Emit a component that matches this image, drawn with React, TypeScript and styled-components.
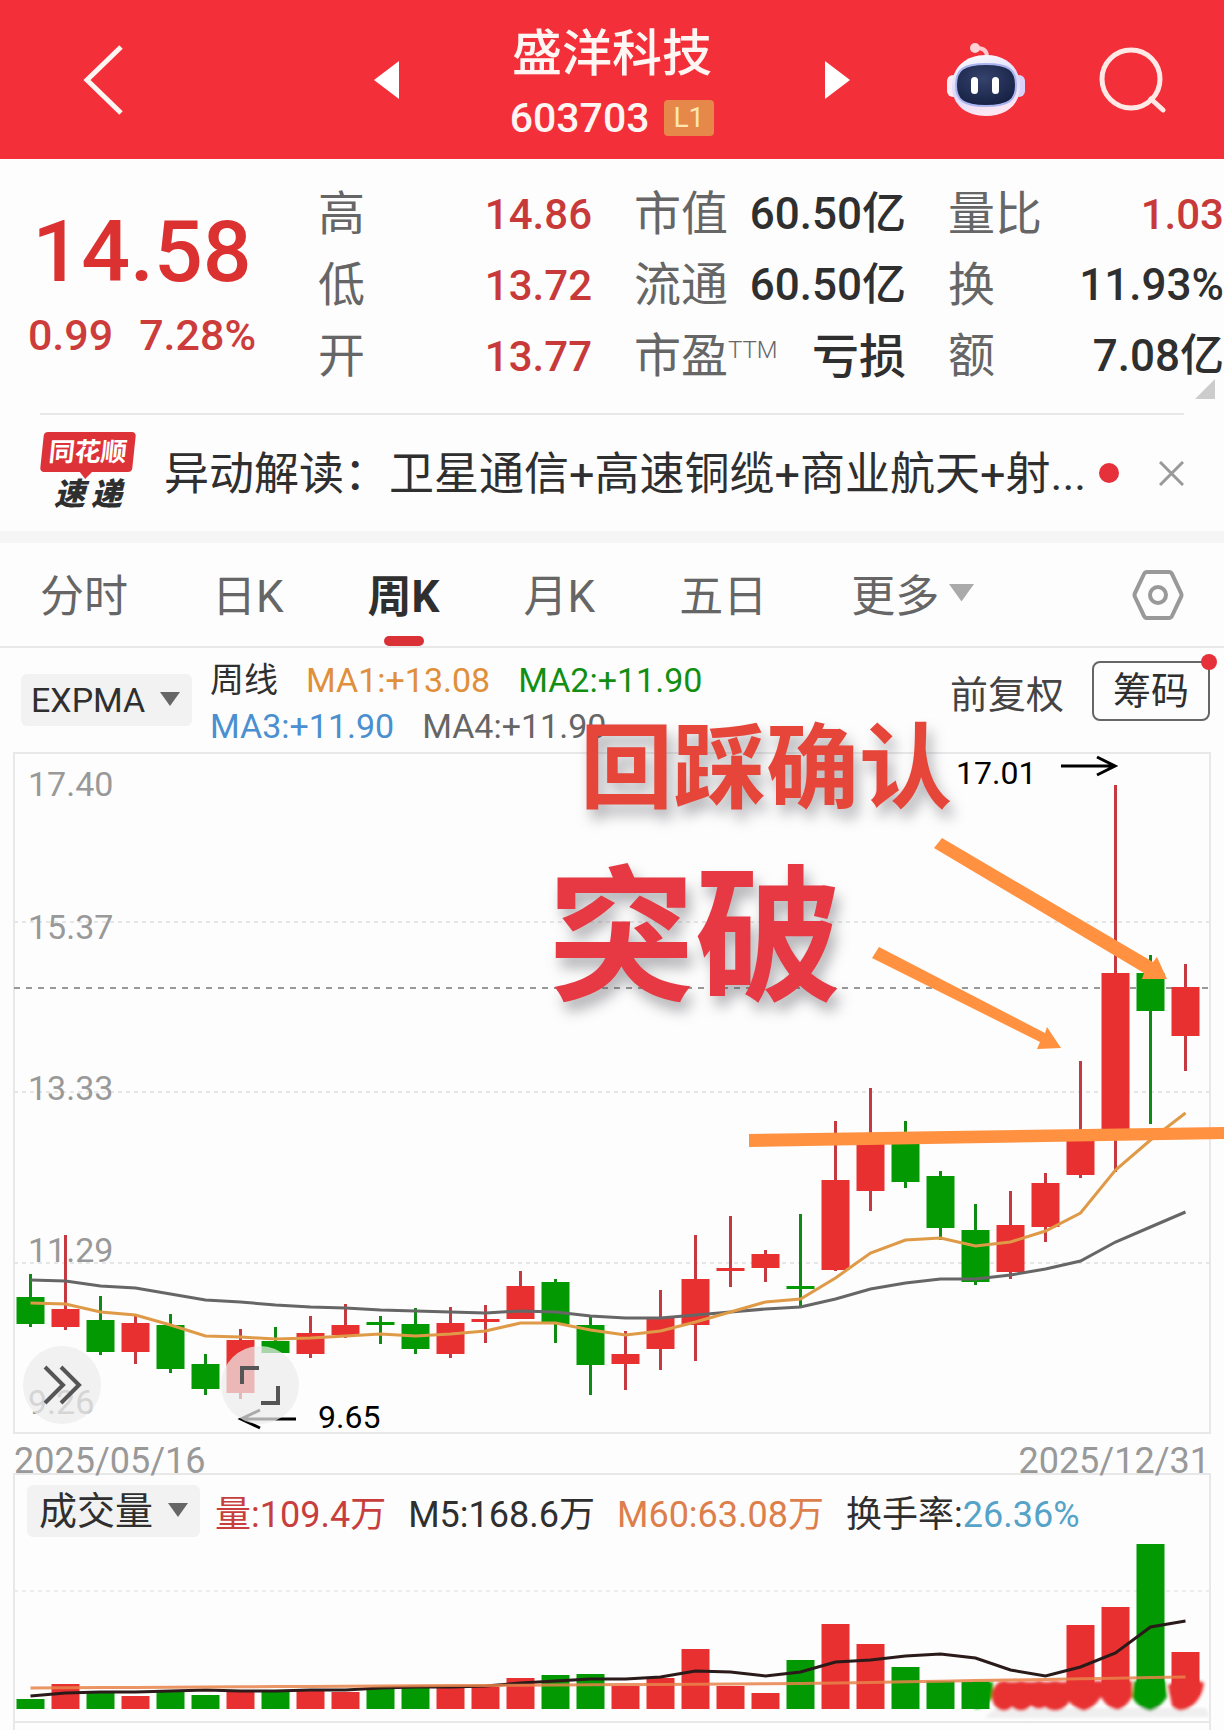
import React from "react";
import styled, { createGlobalStyle } from "styled-components";

const RED = "#e83030";
const GREEN = "#039903";
const INK = "#2f2f2f";
const MUTED = "#666";
const FAINT = "#999";
const LINE = "#e8e8e8";
const ORANGE = "#ff9140";

const GlobalStyle = createGlobalStyle`
  *, *::before, *::after { box-sizing: border-box; }
  body {
    margin: 0;
    background: #fdfdfd;
    color: ${INK};
    font-family: Roboto, "Noto Sans CJK SC", sans-serif;
    overflow-x: hidden;
  }
  button, select { font: inherit; color: inherit; border: 0; background: none; padding: 0; margin: 0; cursor: pointer; }
  h1, h2, p, dl, dd { margin: 0; font-weight: inherit; }
  svg { display: block; }
`;

/* ---------- header ---------- */

const Header = styled.header`
  display: grid;
  grid-template-columns: 1fr auto 1fr;
  align-items: center;
  height: 159px;
  background: #f32f39;
  color: #fff5f3;
`;

const HeaderSide = styled.div<{ $end?: boolean }>`
  display: flex;
  align-items: center;
  justify-content: ${(p) => (p.$end ? "flex-end" : "flex-start")};
  gap: 72px;
  padding: ${(p) => (p.$end ? "0 58px 0 0" : "0 0 0 80px")};
`;

const StockSwitcher = styled.div`
  display: flex;
  align-items: center;
  gap: 111px;
`;

const StockTitle = styled.div`
  display: flex;
  flex-direction: column;
  align-items: center;
  padding-top: 8px;
`;

const StockName = styled.h1`
  font-size: 50px;
  line-height: 68px;
  font-weight: 500;
`;

const StockCode = styled.div`
  display: flex;
  align-items: center;
  gap: 14px;
  font-size: 41px;
  line-height: 60px;
  font-weight: 500;
`;

const LevelBadge = styled.span`
  padding: 0 10px;
  border-radius: 4px;
  background: #e5884a;
  color: #ffe6b0;
  font-size: 28px;
  line-height: 36px;
  font-weight: 400;
`;

/* ---------- quote ---------- */

const Quote = styled.section`
  position: relative;
  display: grid;
  grid-template-columns: 276fr 274fr 272fr 276fr;
  column-gap: 42px;
  height: 254px;
  padding-top: 19px;
`;

const PriceBlock = styled.div`
  display: flex;
  flex-direction: column;
  align-items: center;
  padding: 28px 0 0 8px;
  color: #dc3131;
  font-weight: 500;
`;

const Price = styled.div`
  font-size: 86px;
  line-height: 92px;
`;

const Change = styled.div`
  display: flex;
  gap: 26px;
  font-size: 43px;
  line-height: 74px;
  color: #cc3c3a;
`;

const StatList = styled.dl`
  display: flex;
  flex-direction: column;
`;

const Stat = styled.div`
  display: flex;
  justify-content: space-between;
  line-height: 71px;
  white-space: nowrap;
`;

const StatLabel = styled.dt`
  font-size: 47px;
  color: ${MUTED};
`;

const Superscript = styled.sup`
  font-size: 24px;
  line-height: 24px;
  vertical-align: 14px;
  font-weight: 300;
`;

const StatValue = styled.dd<{ $up: boolean; $words: boolean }>`
  padding-top: 2px;
  font-size: ${(p) => (p.$words ? 47 : p.$up ? 42 : 44)}px;
  line-height: 69px;
  font-weight: 500;
  color: ${(p) => (p.$up ? "#c83a3a" : INK)};
`;

const CornerMark = styled.svg`
  position: absolute;
  right: 9px;
  bottom: 14px;
`;

/* ---------- notice ---------- */

const Notice = styled.section`
  display: flex;
  align-items: center;
  height: 118px;
  margin: 0 40px;
  border-top: 2px solid ${LINE};
`;

const NoticeLogo = styled.div`
  display: flex;
  flex-direction: column;
  align-items: center;
  flex: none;
  width: 96px;
  margin-right: 28px;
`;

const LogoBubble = styled.span`
  position: relative;
  width: 92px;
  border-radius: 4px;
  background: #dd3238;
  color: #fff;
  font-size: 26px;
  line-height: 40px;
  font-weight: 700;
  text-align: center;
  transform: skewX(-6deg);

  &::after {
    content: "";
    position: absolute;
    left: 39px;
    top: 39px;
    border: solid transparent;
    border-width: 8px 7px 0;
    border-top-color: #dd3238;
  }
`;

const LogoCaption = styled.span`
  display: flex;
  gap: 6px;
  padding-top: 4px;
  font-size: 31px;
  line-height: 38px;
  font-weight: 900;
  font-style: italic;
`;

const NoticeText = styled.a`
  flex: 1;
  min-width: 0;
  overflow: hidden;
  padding-top: 4px;
  color: ${INK};
  font-size: 45px;
  line-height: 66px;
  text-decoration: none;
  white-space: nowrap;
`;

const Dot = styled.i<{ $size: number }>`
  display: block;
  flex: none;
  width: ${(p) => p.$size}px;
  height: ${(p) => p.$size}px;
  border-radius: 50%;
  background: #e6303a;
`;

const CloseButton = styled.button`
  flex: none;
  margin-left: 40px;
`;

/* ---------- tabs ---------- */

const Tabs = styled.nav`
  display: flex;
  align-items: stretch;
  gap: 84px;
  height: 117px;
  padding: 0 40px;
  border-top: 12px solid #f5f5f5;
  border-bottom: 2px solid ${LINE};
`;

const Tab = styled.button<{ $active?: boolean }>`
  position: relative;
  display: flex;
  align-items: center;
  gap: 10px;
  padding-bottom: 4px;
  font-size: 44px;
  color: ${(p) => (p.$active ? INK : MUTED)};
  font-weight: ${(p) => (p.$active ? 700 : 400)};
  white-space: nowrap;

  &::after {
    content: "";
    display: ${(p) => (p.$active ? "block" : "none")};
    position: absolute;
    left: 50%;
    bottom: 0;
    width: 40px;
    height: 10px;
    margin-left: -20px;
    border-radius: 5px;
    background: #d93136;
  }
`;

const SettingsButton = styled.button`
  margin-left: auto;
`;

/* ---------- indicator toolbars ---------- */

const Toolbar = styled.div`
  display: flex;
  align-items: center;
  height: 104px;
  padding: 0 14px 0 21px;
`;

const Picker = styled.label`
  position: relative;
  flex: none;
  border-radius: 6px;
  background: #f2f2f2;

  svg { position: absolute; right: 12px; top: 50%; margin-top: -8px; pointer-events: none; }
`;

const PickerSelect = styled.select<{ $size: number; $pad: number }>`
  display: block;
  appearance: none;
  height: 52px;
  padding: 0 46px 0 ${(p) => p.$pad}px;
  font-size: ${(p) => p.$size}px;
  color: ${INK};
`;

const Legend = styled.div`
  display: flex;
  flex: 1;
  flex-wrap: wrap;
  align-content: center;
  column-gap: 28px;
  max-width: 560px;
  margin-left: 18px;
  padding-top: 6px;
  font-size: 34px;
  line-height: 46px;
`;

const Tint = styled.span<{ $color: string }>`
  color: ${(p) => p.$color};
`;

const ToolbarActions = styled.div`
  display: flex;
  align-items: center;
  gap: 28px;
  margin-left: auto;
  padding-bottom: 18px;
`;

const AdjustButton = styled.button`
  font-size: 38px;
  color: #444;
`;

const ChipButton = styled.button`
  position: relative;
  height: 60px;
  padding: 0 19px;
  border: 2px solid #666;
  border-radius: 8px;
  font-size: 38px;
  line-height: 54px;

  ${Dot} { position: absolute; right: -9px; top: -9px; }
`;

/* ---------- charts ---------- */

const ChartArea = styled.section`
  position: relative;
`;

const ChartSvg = styled.svg`
  width: 100%;
  height: auto;
  overflow: visible;
`;

const AxisText = styled.text`
  font-size: 34px;
  fill: ${FAINT};
`;

const MarkText = styled.text`
  font-size: 32px;
  fill: #000;
`;

const NoteText = styled.text<{ $size: number }>`
  font-family: "Noto Sans CJK SC", sans-serif;
  font-size: ${(p) => p.$size}px;
  font-weight: 700;
  filter: drop-shadow(5px 10px 7px rgba(70, 70, 80, 0.4));
`;

const RoundButton = styled.button<{ $x: number }>`
  position: absolute;
  left: ${(p) => p.$x}px;
  bottom: 10px;
  display: grid;
  place-items: center;
  width: 78px;
  height: 78px;
  border-radius: 50%;
  background: rgba(235, 235, 235, 0.72);
`;

const DateRow = styled.div`
  display: flex;
  justify-content: space-between;
  height: 39px;
  margin: 0 14px;
  color: ${FAINT};
  font-size: 36px;
  line-height: 54px;
`;

const VolumeHeader = styled.div`
  display: flex;
  align-items: center;
  height: 64px;
  margin: 0 13px;
  padding: 10px 12px 0;
  border: 2px solid ${LINE};
  border-bottom: 0;
`;

const VolumeLegend = styled.div`
  display: flex;
  gap: 22px;
  margin-left: 15px;
  font-size: 36px;
  white-space: nowrap;
`;

const NextPanel = styled.div`
  height: 9px;
  margin: 0 13px;
  border: 2px solid ${LINE};
  border-bottom: 0;
`;

/* ---------- data, in chart canvas units ---------- */

type Candle = [up: 0 | 1, high: number, top: number, bottom: number, low: number, volumeTop: number];

const candles: Candle[] = [
  [0, 1274, 1297, 1324, 1327, 1699], [1, 1235, 1309, 1327, 1330, 1684], [0, 1296, 1320, 1352, 1355, 1693],
  [1, 1316, 1323, 1352, 1364, 1696], [0, 1314, 1325, 1369, 1373, 1692], [0, 1354, 1364, 1389, 1395, 1695],
  [1, 1329, 1340, 1393, 1399, 1691], [0, 1327, 1341, 1353, 1353, 1690], [1, 1316, 1333, 1354, 1358, 1689],
  [1, 1304, 1325, 1335, 1338, 1692], [0, 1316, 1322, 1325, 1344, 1689], [0, 1308, 1324, 1349, 1354, 1688],
  [1, 1307, 1323, 1354, 1358, 1688], [1, 1305, 1319, 1322, 1343, 1687], [1, 1271, 1286, 1319, 1319, 1678],
  [0, 1279, 1282, 1324, 1343, 1675], [0, 1315, 1325, 1365, 1395, 1674], [1, 1331, 1354, 1364, 1390, 1686],
  [1, 1290, 1318, 1349, 1370, 1678], [1, 1235, 1279, 1325, 1361, 1649], [1, 1216, 1268, 1271, 1287, 1686],
  [1, 1250, 1254, 1268, 1282, 1693], [0, 1214, 1286, 1289, 1307, 1660], [1, 1121, 1180, 1270, 1271, 1624],
  [1, 1088, 1142, 1191, 1211, 1644], [0, 1121, 1144, 1182, 1188, 1667], [0, 1171, 1176, 1228, 1240, 1681],
  [0, 1204, 1230, 1282, 1285, 1682], [1, 1191, 1225, 1272, 1279, 1682], [1, 1173, 1183, 1227, 1242, 1682],
  [1, 1061, 1138, 1175, 1178, 1625], [1, 785, 973, 1132, 1172, 1607], [0, 955, 973, 1011, 1124, 1544],
  [1, 964, 987, 1036, 1071, 1652],
];

const fastAverage = [1303, 1304, 1312, 1315, 1325, 1336, 1337, 1339, 1338, 1336, 1334, 1336, 1334, 1331, 1323, 1323, 1330, 1335, 1331, 1322, 1312, 1302, 1299, 1278, 1253, 1240, 1238, 1246, 1242, 1231, 1213, 1170, 1140, 1113];
const slowAverage = [1280, 1281, 1286, 1288, 1294, 1300, 1302, 1305, 1307, 1308, 1310, 1311, 1312, 1313, 1311, 1312, 1316, 1318, 1318, 1315, 1312, 1309, 1307, 1299, 1289, 1283, 1279, 1279, 1275, 1269, 1261, 1242, 1227, 1212];
const volumeM5 = [1696, 1693, 1692, 1692, 1691, 1690, 1691, 1691, 1690, 1690, 1688, 1687, 1687, 1686, 1683, 1681, 1679, 1679, 1677, 1671, 1672, 1676, 1672, 1662, 1660, 1656, 1654, 1658, 1670, 1676, 1667, 1653, 1627, 1621];
const volumeM60 = candles.map((_, i) => 1688 - i * 0.2 - Math.max(0, i - 22) * 0.4);

const candleX = (i: number) => 30.5 + i * 35;
const toPoints = (ys: number[]) => ys.map((y, i) => `${candleX(i)},${y}`).join(" ");

const priceLabels: [string, number][] = [["17.40", 796], ["15.37", 939], ["13.33", 1100], ["11.29", 1262], ["9.26", 1414]];

const stats = [
  [["高", "14.86", true], ["低", "13.72", true], ["开", "13.77", true]],
  [["市值", "60.50亿", false], ["流通", "60.50亿", false], ["市盈", "亏损", false]],
  [["量比", "1.03", true], ["换", "11.93%", false], ["额", "7.08亿", false]],
] as [string, string, boolean][][];

/* ---------- pieces ---------- */

const Caret = ({ size = 20, color = "#666" }: { size?: number; color?: string }) => (
  <svg width={size} height={size * 0.7} viewBox="0 0 20 14"><path d="M0 0h20L10 14z" fill={color} /></svg>
);

const Robot = () => (
  <svg width="80" height="74" viewBox="0 0 80 74">
    <defs>
      <linearGradient id="shell" x1="0" y1="0" x2="0.3" y2="1">
        <stop offset="0" stopColor="#fff" />
        <stop offset="0.6" stopColor="#dcd8fb" />
        <stop offset="1" stopColor="#fbe6f2" />
      </linearGradient>
      <radialGradient id="visor" cx="0.45" cy="0.35" r="0.7">
        <stop offset="0" stopColor="#35426c" />
        <stop offset="1" stopColor="#151f42" />
      </radialGradient>
    </defs>
    <path d="M41 14c0-6-3-9-10-9" fill="none" stroke="#ffc9cf" strokeWidth="4" />
    <circle cx="29" cy="5" r="5" fill="#ffd3d6" />
    <rect x="1" y="32" width="12" height="22" rx="6" fill="#fdeaf3" />
    <rect x="67" y="32" width="12" height="22" rx="6" fill="#d9d2fa" />
    <path d="M40 12c20 0 34 12 34 31S60 73 40 73 6 62 6 43s14-31 34-31z" fill="url(#shell)" />
    <path d="M40 21c23 0 30 6 30 21s-7 21-30 21-30-6-30-21 7-21 30-21z" fill="url(#visor)" stroke="#a9b4ef" strokeWidth="2" />
    <rect x="25" y="34" width="7" height="17" rx="3.5" fill="#fff" />
    <rect x="46" y="34" width="7" height="17" rx="3.5" fill="#fff" />
  </svg>
);

const PriceChart = () => (
  <ChartSvg viewBox="0 752 1224 682" role="img" aria-label="周K">
    <rect x="14" y="753" width="1196" height="680" fill="none" stroke={LINE} strokeWidth="2" />
    {[922, 1092, 1263].map((y) => (
      <path key={y} d={`M14 ${y}H1210`} stroke="#e6e6e6" strokeWidth="2" strokeDasharray="4 4" />
    ))}
    <path d="M14 988H1210" stroke="#999" strokeWidth="2" strokeDasharray="6 6" />
    {priceLabels.map(([label, y]) => (
      <AxisText key={label} x="28" y={y}>{label}</AxisText>
    ))}
    {candles.map(([up, high, top, bottom, low], i) => (
      <g key={i} fill={up ? RED : GREEN}>
        <rect x={candleX(i) - 1.5} y={high} width="3" height={low - high} fill={up ? "#c43a40" : "#0f8a12"} />
        <rect x={candleX(i) - 14} y={top} width="28" height={bottom - top} />
      </g>
    ))}
    <polyline points={toPoints(slowAverage)} fill="none" stroke="#666" strokeWidth="3" />
    <polyline points={toPoints(fastAverage)} fill="none" stroke="#df9a48" strokeWidth="3" />
    <MarkText x="956" y="784">17.01</MarkText>
    <path d="M1061 766h53M1097 757l18 9-18 9" fill="none" stroke="#000" strokeWidth="3" />
    <MarkText x="318" y="1428">9.65</MarkText>
    <path d="M296 1419h-54M260 1410l-19 9 19 9" fill="none" stroke="#000" strokeWidth="3" />
    <path d="M749 1134L1224 1127V1139L749 1147z" fill={ORANGE} />
    <path d="M942 838L1153 962L1157 957L1167 979H1142L1144 973L934 848z" fill={ORANGE} />
    <path d="M879 947L1045 1033L1047 1027L1061 1048L1037 1049L1040 1042L872 958z" fill={ORANGE} />
    <NoteText $size={93} x="580" y="801" fill="#e6463a">回踩确认</NoteText>
    <NoteText $size={147} x="548" y="989" fill="#e63944">突破</NoteText>
  </ChartSvg>
);

const VolumeChart = () => (
  <ChartSvg viewBox="0 1537 1224 184" role="img" aria-label="成交量">
    <defs>
      <filter id="smudge" x="-10%" y="-20%" width="120%" height="140%"><feGaussianBlur stdDeviation="1.5" /></filter>
    </defs>
    <path d="M14 1537V1721M1210 1537V1721" stroke={LINE} strokeWidth="2" />
    <path d="M14 1591H1210" stroke="#ececec" strokeWidth="2" strokeDasharray="4 4" />
    {candles.map(([up, , , , , top], i) => (
      i === 28 || i === 29 ? null : (
        <rect key={i} x={candleX(i) - 14} y={top} width="28" height={(i > 29 ? 1695 : 1709) - top} fill={up ? RED : GREEN} />
      )
    ))}
    <g filter="url(#smudge)">
      <path d="M984 1718l12-10h210l4 9z" fill="#efefef" />
      <path d="M975 1682h18v14q-6 12-18 13z" fill={GREEN} />
      <g fill={RED}>
        <ellipse cx="1004" cy="1696" rx="12" ry="15" />
        <ellipse cx="1021" cy="1696" rx="13" ry="15" />
        <ellipse cx="1039" cy="1695" rx="12" ry="14" />
        <ellipse cx="1055" cy="1696" rx="15" ry="15" />
        <path d="M1000 1682h66v12h-66z" />
        <path d="M1066 1681h35v16q-8 12-17 14q-12-3-18-14z" />
        <path d="M1101 1681h31v16q-7 12-15 13q-10-2-16-13z" />
        <path d="M1168 1685q20-10 36-2q-2 18-17 26q-9 4-15-3z" />
      </g>
      <path d="M1134 1681h31l2 16q-8 12-17 14q-12-3-18-14z" fill={GREEN} />
    </g>
    <polyline points={toPoints(volumeM5)} fill="none" stroke="#2b1a1a" strokeWidth="3" />
    <polyline points={toPoints(volumeM60)} fill="none" stroke="#e8834a" strokeWidth="3" strokeOpacity="0.85" />
  </ChartSvg>
);

export default function App() {
  return (
    <main>
      <GlobalStyle />
      <Header>
        <HeaderSide>
          <button aria-label="返回">
            <svg width="44" height="72" viewBox="0 0 44 72"><path d="M41 3L7 36l34 33" fill="none" stroke="currentColor" strokeWidth="5" /></svg>
          </button>
        </HeaderSide>
        <StockSwitcher>
          <button aria-label="上一只">
            <svg width="25" height="38" viewBox="0 0 25 38"><path d="M25 0v38L0 19z" fill="#fff" /></svg>
          </button>
          <StockTitle>
            <StockName>盛洋科技</StockName>
            <StockCode>603703<LevelBadge>L1</LevelBadge></StockCode>
          </StockTitle>
          <button aria-label="下一只">
            <svg width="25" height="38" viewBox="0 0 25 38"><path d="M0 0v38l25-19z" fill="#fff" /></svg>
          </button>
        </StockSwitcher>
        <HeaderSide $end>
          <button aria-label="智能助手"><Robot /></button>
          <button aria-label="搜索">
            <svg width="68" height="68" viewBox="0 0 68 68" fill="none" stroke="#ffe9e6" strokeWidth="5">
              <circle cx="33" cy="33" r="29" /><path d="M53 53l12 11" strokeLinecap="round" />
            </svg>
          </button>
        </HeaderSide>
      </Header>

      <Quote>
        <PriceBlock>
          <Price>14.58</Price>
          <Change><span>0.99</span><span>7.28%</span></Change>
        </PriceBlock>
        {stats.map((column, c) => (
          <StatList key={c}>
            {column.map(([label, value, up]) => (
              <Stat key={label}>
                <StatLabel>{label}{label === "市盈" && <Superscript>TTM</Superscript>}</StatLabel>
                <StatValue $up={up} $words={!/\d/.test(value)}>{value}</StatValue>
              </Stat>
            ))}
          </StatList>
        ))}
        <CornerMark width="20" height="20" viewBox="0 0 20 20"><path d="M20 0v20H0z" fill="#ccc" /></CornerMark>
      </Quote>

      <Notice>
        <NoticeLogo>
          <LogoBubble>同花顺</LogoBubble>
          <LogoCaption><span>速</span><span>递</span></LogoCaption>
        </NoticeLogo>
        <NoticeText href="#notice">异动解读：卫星通信+高速铜缆+商业航天+射...</NoticeText>
        <Dot $size={20} />
        <CloseButton aria-label="关闭">
          <svg width="25" height="25" viewBox="0 0 25 25"><path d="M1 1l23 23M24 1L1 24" stroke="#999" strokeWidth="3" /></svg>
        </CloseButton>
      </Notice>

      <Tabs>
        <Tab>分时</Tab>
        <Tab>日K</Tab>
        <Tab $active>周K</Tab>
        <Tab>月K</Tab>
        <Tab>五日</Tab>
        <Tab>更多<Caret size={25} color="#aaa" /></Tab>
        <SettingsButton aria-label="设置">
          <svg width="52" height="50" viewBox="0 0 52 50" fill="none" stroke="#999" strokeWidth="4" strokeLinejoin="round">
            <path d="M15 2h22q2 0 3 2l9 19q1 2 0 4l-9 19q-1 2-3 2H15q-2 0-3-2L3 27q-1-2 0-4l9-19q1-2 3-2z" />
            <circle cx="26" cy="25" r="8" />
          </svg>
        </SettingsButton>
      </Tabs>

      <Toolbar>
        <Picker>
          <PickerSelect $size={34} $pad={10} aria-label="指标" defaultValue="EXPMA">
            <option>EXPMA</option>
          </PickerSelect>
          <Caret />
        </Picker>
        <Legend>
          <span>周线</span>
          <Tint $color="#e08f3a">MA1:+13.08</Tint>
          <Tint $color="#128f12">MA2:+11.90</Tint>
          <Tint $color="#4a8fd0">MA3:+11.90</Tint>
          <Tint $color={MUTED}>MA4:+11.90</Tint>
        </Legend>
        <ToolbarActions>
          <AdjustButton>前复权</AdjustButton>
          <ChipButton>筹码<Dot $size={16} /></ChipButton>
        </ToolbarActions>
      </Toolbar>

      <ChartArea>
        <PriceChart />
        <RoundButton $x={23} aria-label="展开">
          <svg width="40" height="40" viewBox="0 0 40 40"><path d="M3 2l18 18L3 38M19 2l18 18-18 18" fill="none" stroke="#555" strokeWidth="4" /></svg>
        </RoundButton>
        <RoundButton $x={221} aria-label="全屏">
          <svg width="42" height="42" viewBox="0 0 42 42"><path d="M3 20V4h17M39 22v17H22" fill="none" stroke="#555" strokeWidth="4" /></svg>
        </RoundButton>
      </ChartArea>

      <DateRow><span>2025/05/16</span><span>2025/12/31</span></DateRow>

      <VolumeHeader>
        <Picker>
          <PickerSelect $size={38} $pad={12} aria-label="副图指标" defaultValue="成交量">
            <option>成交量</option>
          </PickerSelect>
          <Caret />
        </Picker>
        <VolumeLegend>
          <Tint $color="#c83e3e">量:109.4万</Tint>
          <span>M5:168.6万</span>
          <Tint $color="#dd7f4c">M60:63.08万</Tint>
          <span>换手率:<Tint $color="#55a3c8">26.36%</Tint></span>
        </VolumeLegend>
      </VolumeHeader>
      <VolumeChart />
      <NextPanel />
    </main>
  );
}
